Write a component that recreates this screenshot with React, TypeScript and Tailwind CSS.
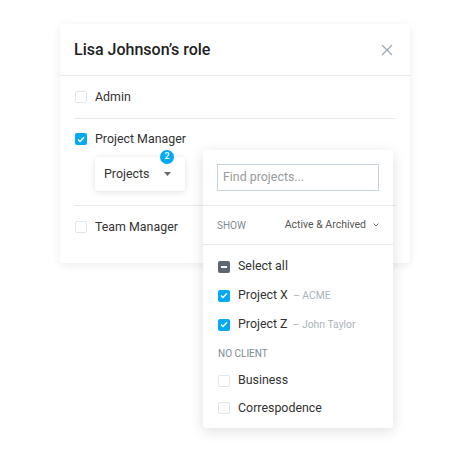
import React from 'react'

const font = { fontFamily: 'Roboto, "Liberation Sans", sans-serif' }

const Check = ({ state }: { state: 'on' | 'off' | 'mixed' }) => {
  if (state === 'on') {
    return (
      <span className="flex h-[12px] w-[12px] shrink-0 items-center justify-center rounded-[2px] bg-[#03a9f4]">
        <svg width="8" height="7" viewBox="0 0 8 7" fill="none">
          <path d="M1 3.6 L3 5.5 L7 1.2" stroke="white" strokeWidth="1.4" />
        </svg>
      </span>
    )
  }
  if (state === 'mixed') {
    return (
      <span className="flex h-[12px] w-[12px] shrink-0 items-center justify-center rounded-[2px] bg-[#5b6874]">
        <span className="h-[2px] w-[6px] bg-white" />
      </span>
    )
  }
  return <span className="h-[12px] w-[12px] shrink-0 rounded-[2px] border border-[#dfe5ea] bg-white" />
}

const Row = ({
  state,
  label,
  sub,
  className,
}: {
  state: 'on' | 'off' | 'mixed'
  label: string
  sub?: string
  className: string
}) => (
  <div className={`flex items-center gap-[8px] ${className}`}>
    <Check state={state} />
    <span className="text-[12.4px] text-[#333]">{label}</span>
    {sub && <span className="-ml-[3px] text-[10.4px] text-[#aab3ba]">– {sub}</span>}
  </div>
)

export default function App() {
  return (
    <div className="relative h-[452px] w-[470px] bg-white" style={font}>
      <div className="absolute left-[60px] top-[24px] w-[350px] rounded-[3px] bg-white shadow-[0_2px_10px_rgba(0,0,0,0.08)]">
        <div className="flex h-[52px] items-center justify-between border-b border-[#e4eaee] pl-[14px] pr-[17px]">
          <span className="text-[16px] font-medium text-[#222]">Lisa Johnson’s role</span>
          <svg width="12" height="12" viewBox="0 0 12 12">
            <path d="M1 1 L11 11 M11 1 L1 11" stroke="#9aa8b3" strokeWidth="1.2" />
          </svg>
        </div>
        <div className="px-[14px] pb-[15px]">
          <Row state="off" label="Admin" className="h-[42px] pl-[1px]" />
          <div className="h-px bg-[#e4eaee]" />
          <Row state="on" label="Project Manager" className="h-[40px] pl-[1px]" />
          <div className="relative -mt-[2px] ml-[21px] flex h-[34px] w-[90px] items-center justify-between rounded-[2px] bg-white pl-[9px] pr-[14px] shadow-[0_1px_6px_rgba(0,0,0,0.12)]">
            <span className="text-[12.4px] text-[#333]">Projects</span>
            <svg width="7" height="4" viewBox="0 0 7 4">
              <path d="M0 0 L7 0 L3.5 4 Z" fill="#666" />
            </svg>
            <span className="absolute -top-[7px] left-[65px] flex h-[14px] w-[14px] items-center justify-center rounded-full bg-[#03a9f4] text-[9px] font-medium text-white">
              2
            </span>
          </div>
          <div className="mt-[14px] h-px bg-[#e4eaee]" />
          <Row state="off" label="Team Manager" className="h-[42px] pl-[1px]" />
        </div>
      </div>

      <div className="absolute left-[203px] top-[150px] w-[190px] rounded-[3px] bg-white shadow-[0_3px_14px_rgba(0,0,0,0.13)]">
        <div className="border-b border-[#e4eaee] px-[14px] pb-[14px] pt-[14px]">
          <div className="flex h-[27px] items-center border border-[#c6d3da] pl-[5px] text-[12.4px] text-[#999]">
            Find projects...
          </div>
        </div>
        <div className="flex h-[39px] items-center justify-between border-b border-[#e4eaee] pl-[14px] pr-[14px]">
          <span className="text-[10px] text-[#7d8b97]">SHOW</span>
          <span className="flex items-center gap-[7px] text-[10.5px] text-[#555]">
            Active &amp; Archived
            <svg width="6" height="4" viewBox="0 0 6 4">
              <path d="M0.5 0.5 L3 3 L5.5 0.5" stroke="#777" strokeWidth="1" fill="none" />
            </svg>
          </span>
        </div>
        <div className="pb-[6px] pl-[15px] pt-[7px]">
          <Row state="mixed" label="Select all" className="h-[29px]" />
          <Row state="on" label="Project X" sub="ACME" className="h-[29px]" />
          <Row state="on" label="Project Z" sub="John Taylor" className="h-[29px]" />
          <div className="flex h-[28px] items-center text-[10px] text-[#7d8b97]">NO CLIENT</div>
          <Row state="off" label="Business" className="h-[27px]" />
          <Row state="off" label="Correspodence" className="h-[28px]" />
        </div>
      </div>
    </div>
  )
}
